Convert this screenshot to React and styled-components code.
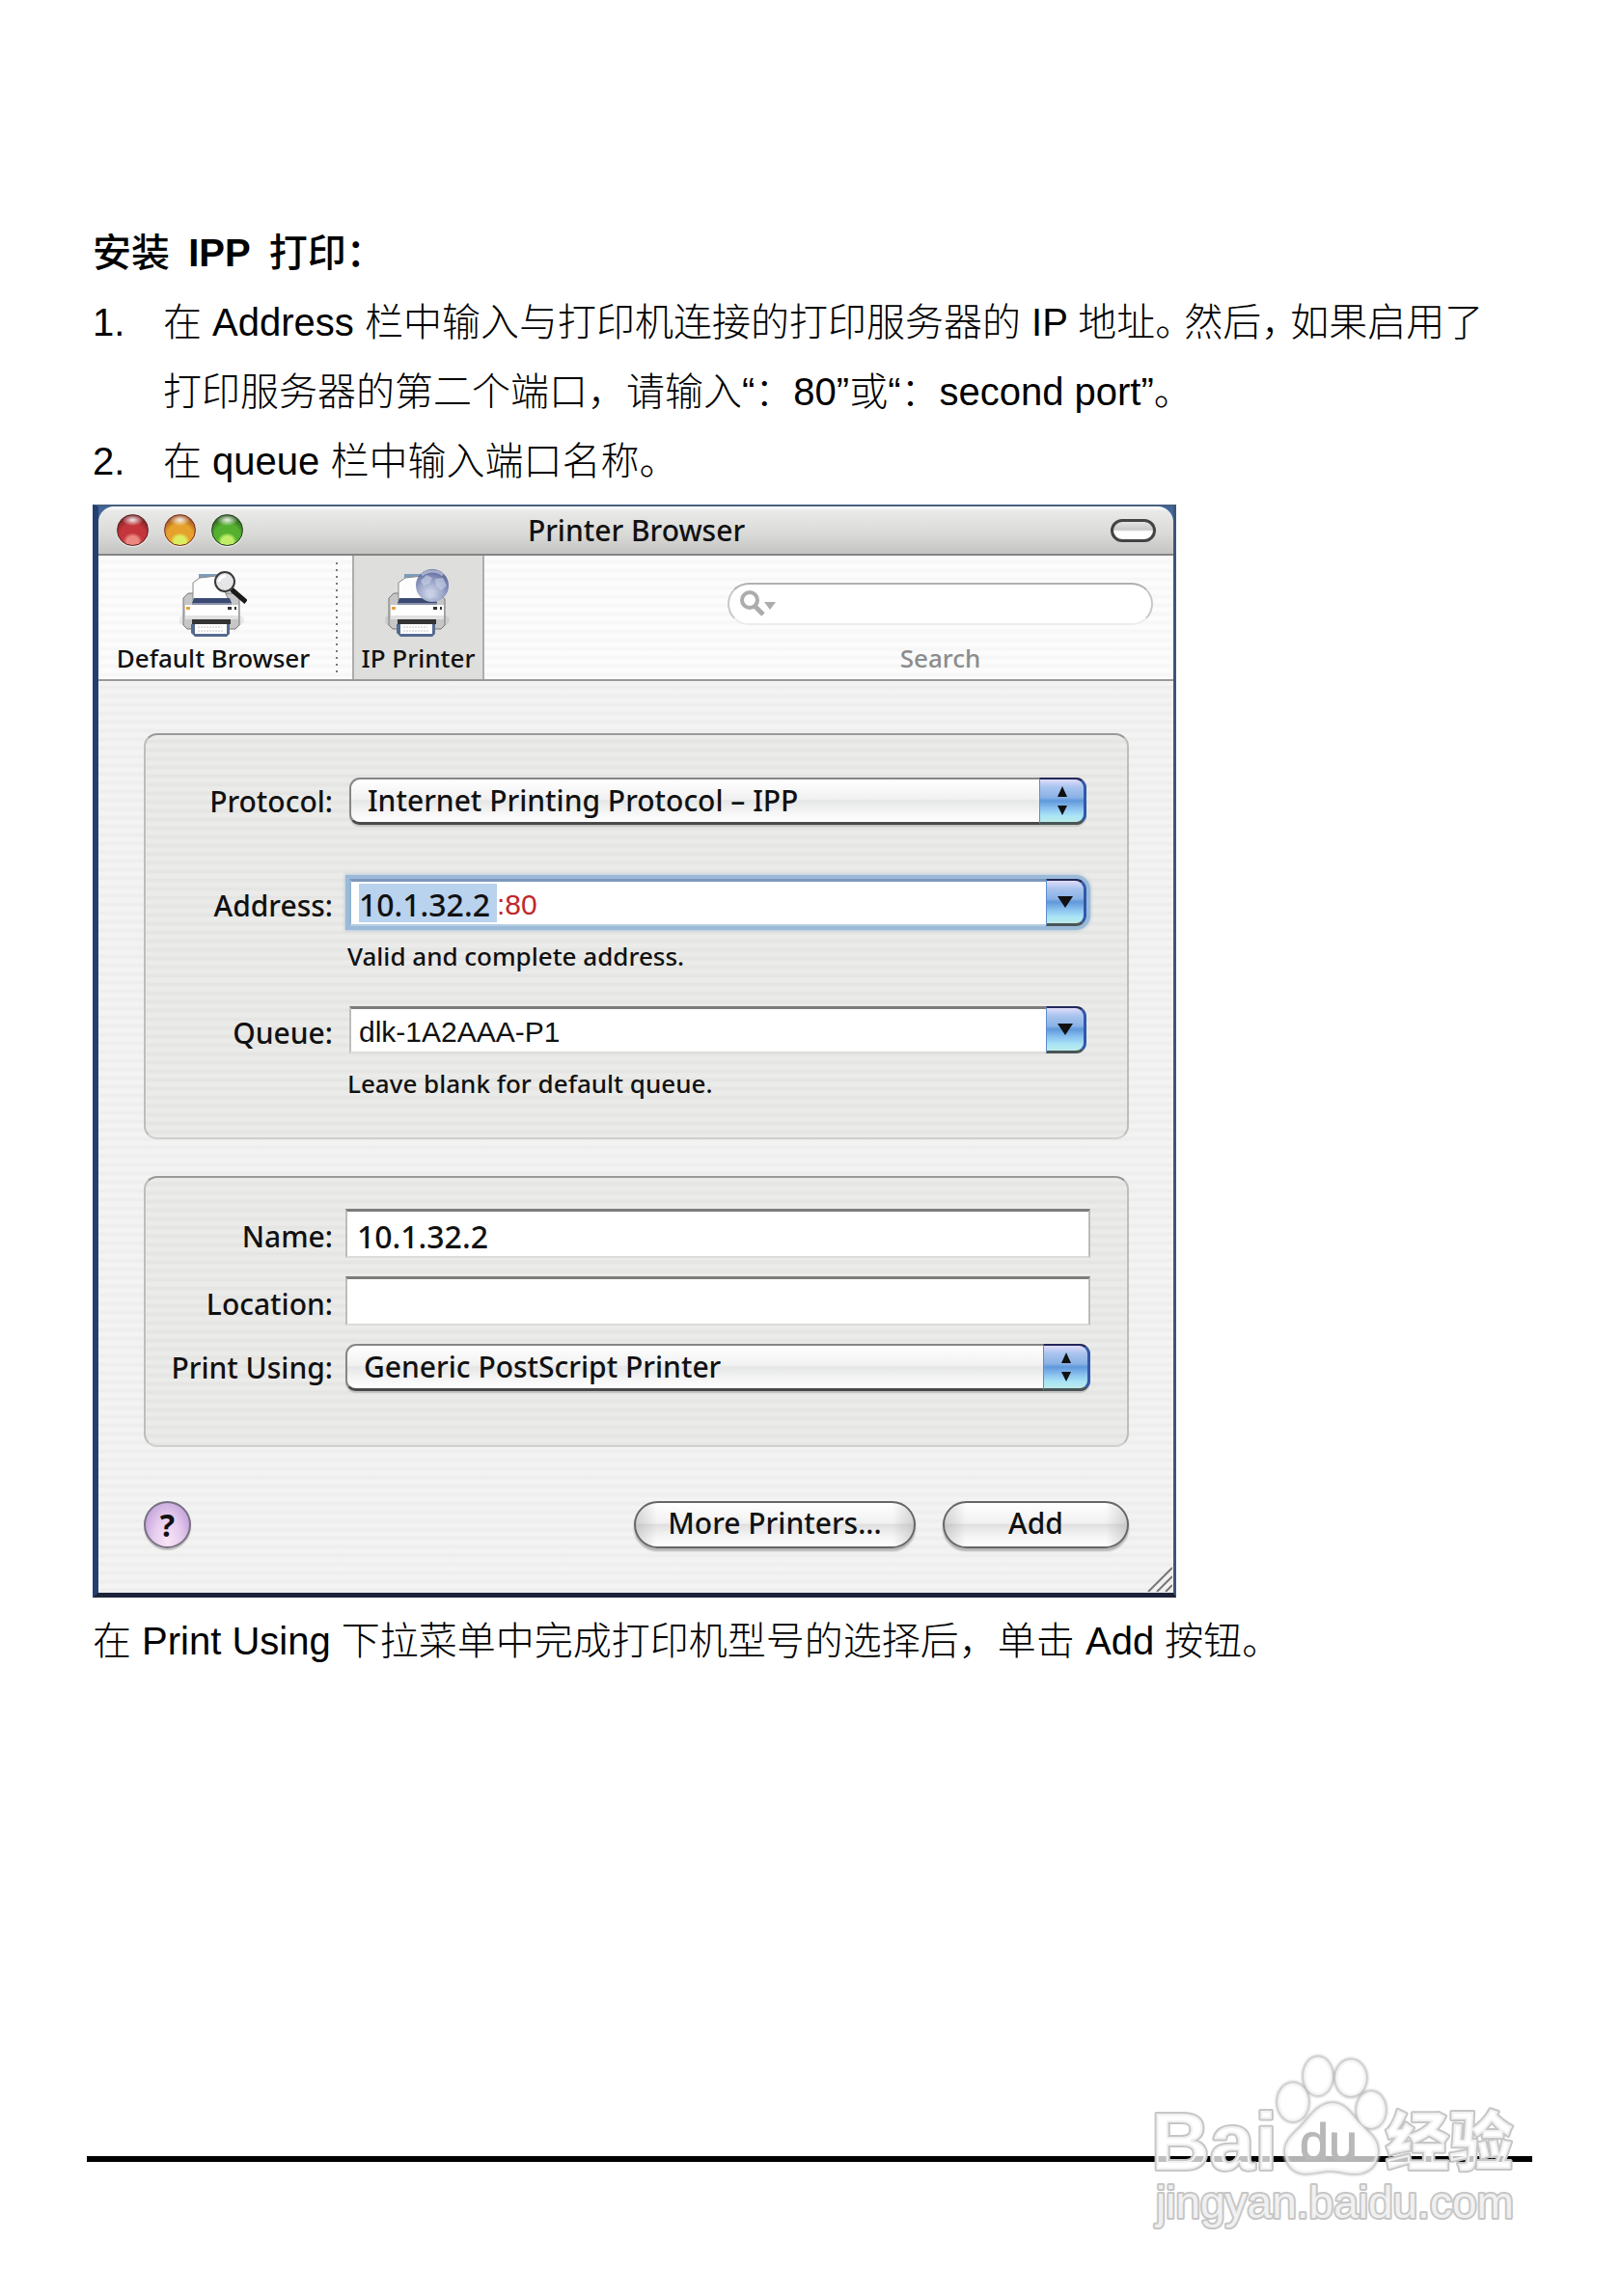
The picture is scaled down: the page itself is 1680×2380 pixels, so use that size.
import React from "react";
import styled, { createGlobalStyle, css } from "styled-components";

const UI_FONT = '"Noto Sans", "Open Sans", sans-serif';
const DOC_FONT = '"Liberation Sans", "Noto Sans CJK SC", sans-serif';

const GlobalStyle = createGlobalStyle`
  *, *::before, *::after { box-sizing: border-box; }
  body { margin: 0; background: #fff; color: #000; }
  button, input, select { font: inherit; color: inherit; margin: 0; }
`;

const pinstripe = (a, b) => css`
  background-color: ${a};
  background-image: repeating-linear-gradient(${a} 0 4px, ${b} 5px 8px, ${a} 9px);
`;

/* ---------- document ---------- */

const Page = styled.div`
  display: flex;
  flex-direction: column;
  min-height: 100vh;
  padding-top: 226px;
  font-family: ${DOC_FONT};
  font-size: 40px;
  font-weight: 300;
  line-height: 72px;
`;

const Article = styled.main`
  padding: 0 120px 0 96px;
`;

const Heading = styled.h1`
  margin: 0;
  font-size: inherit;
  font-weight: 500;
`;

const Acronym = styled.span`
  margin: 0 8px;
  font-weight: 700;
`;

const Steps = styled.ol`
  margin: 0;
  padding: 0;
  list-style: none;
`;

const Step = styled.li`
  display: grid;
  grid-template-columns: 73px 1fr;
`;

const Paragraph = styled.p`
  margin: 0;
`;

const TightMark = styled.span`
  margin-right: 10px;
  font-feature-settings: "halt";
`;

const Footer = styled.footer`
  position: relative;
  margin: auto 92px 0 90px;
  padding-bottom: 139px;
`;

const Rule = styled.hr`
  height: 6px;
  margin: 0;
  border: 0;
  background: #000;
`;

const Watermark = styled.svg`
  position: absolute;
  right: 6px;
  top: -113px;
  width: 400px;
  height: 200px;
`;

/* ---------- window ---------- */

const Window = styled.section`
  max-width: 1123px;
  margin: 9px 0;
  border: solid;
  border-width: 2px 3px 5px 6px;
  border-color: #46607f #3a5876 #1c2238 #263f72;
  background: #41669a;
  font-family: ${UI_FONT};
  font-size: 30px;
  font-weight: 500;
  line-height: 40px;
  color: #111;
`;

const TitleBar = styled.header`
  display: grid;
  grid-template-columns: 1fr auto 1fr;
  align-items: center;
  height: 51px;
  padding: 0 18px 0 19px;
  border-bottom: 2px solid #858585;
  border-radius: 16px 16px 0 0;
  background: linear-gradient(#fff, #e9e9e8 5px, #d9d9d7 60%, #c4c4c3);
`;

const Lights = styled.div`
  display: flex;
  gap: 16px;
`;

const Light = styled.button`
  width: 33px;
  height: 33px;
  padding: 0;
  border: 1px solid ${(p) => p.$rim};
  border-radius: 50%;
  background:
    radial-gradient(ellipse 11px 6px at 50% 16%, rgba(255, 255, 255, 0.9), rgba(255, 255, 255, 0) 100%),
    radial-gradient(ellipse 10px 9px at 50% 88%, ${(p) => p.$glow} 0 60%, rgba(255, 255, 255, 0) 100%),
    radial-gradient(circle at 50% 75%, ${(p) => p.$mid} 0 50%, ${(p) => p.$rim} 92%);
  box-shadow: 0 1px 1px rgba(255, 255, 255, 0.7);
`;

const Title = styled.h2`
  margin: 0;
  font-size: inherit;
  font-weight: inherit;
`;

const Pill = styled.button`
  justify-self: end;
  width: 47px;
  height: 24px;
  padding: 0;
  border: 3px solid #444;
  border-radius: 12px;
  background: linear-gradient(#e4e4e4, #c9c9c9 45%, #fff 55%);
`;

const Toolbar = styled.div`
  display: flex;
  height: 130px;
  border-bottom: 2px solid #999;
  font-size: 26px;
  line-height: 32px;
  ${pinstripe("#fcfcfc", "#f7f7f7")}
`;

const Tool = styled.button`
  display: flex;
  flex-direction: column;
  align-items: center;
  gap: 6px;
  padding: 14px 0 0;
  white-space: nowrap;
  width: ${(p) => (p.$active ? 137 : 238)}px;
  border: solid #adadad;
  border-width: 0 ${(p) => (p.$active ? 2 : 0)}px;
  background: ${(p) => (p.$active ? "#dededc" : "transparent")};
`;

const Dots = styled.div`
  width: 2px;
  height: 116px;
  margin: 7px 15px 0 8px;
  background: repeating-linear-gradient(#777 0 2px, transparent 2px 7px);
`;

const SearchArea = styled.div`
  display: flex;
  flex-direction: column;
  align-items: center;
  gap: 18px;
  width: 441px;
  margin-left: auto;
  margin-right: 21px;
  padding-top: 28px;
  color: #8c8c8c;
`;

const SearchBox = styled.div`
  display: flex;
  align-items: center;
  width: 100%;
  height: 44px;
  padding: 0 10px;
  border: 2px solid #c8c8c8;
  border-top-color: #b0b0b0;
  border-bottom-color: #ececec;
  border-radius: 22px;
  background: #fff;
`;

const BareInput = styled.input`
  flex: ${(p) => (p.$width ? "none" : 1)};
  min-width: 0;
  width: ${(p) => (p.$width ? p.$width + "px" : "auto")};
  height: 40px;
  padding: 0;
  border: 0;
  outline: 0;
  background: ${(p) => (p.$selected ? "#b9d2ee" : "transparent")};
  color: ${(p) => p.$color || "inherit"};
  font-family: ${(p) => (p.$plain ? DOC_FONT : "inherit")};
  font-size: ${(p) => (p.$plain ? 30 : 32)}px;
`;

const Body = styled.div`
  position: relative;
  padding: 54px 46px 46px 47px;
  ${pinstripe("#f3f3f3", "#eeeeee")}
`;

const Group = styled.fieldset`
  display: grid;
  grid-template-columns: 194px 1fr;
  align-items: center;
  min-width: 0;
  margin: 0 0 ${(p) => (p.$last ? 56 : 38)}px;
  column-gap: ${(p) => (p.$last ? 13 : 17)}px;
  row-gap: ${(p) => (p.$last ? 19 : 0)}px;
  padding: ${(p) => (p.$last ? "32px 38px 56px 0" : "44px 42px 38px 0")};
  border: 2px solid #bdbdbb;
  border-top-color: #999997;
  border-bottom-color: #d0d0ce;
  border-radius: 14px;
  ${pinstripe("#ebebe9", "#e5e5e3")}
`;

const Label = styled.label`
  padding-top: ${(p) => (p.$low ? 6 : 0)}px;
  text-align: right;
  white-space: nowrap;
`;

const Hint = styled.p`
  grid-column: 2;
  margin: 13px 0 ${(p) => (p.$spaced ? 34 : 0)}px -2px;
  font-size: 26px;
  line-height: 36px;
`;

const Popup = styled.div`
  position: relative;
  height: 49px;
  margin-bottom: ${(p) => (p.$spaced ? 56 : 0)}px;
`;

const PopupLabel = styled(Label)`
  margin-bottom: ${(p) => (p.$spaced ? 56 : 0)}px;
`;

const Select = styled.select`
  appearance: none;
  display: block;
  width: 100%;
  height: 49px;
  padding: 0 60px 0 17px;
  border: 2px solid #868686;
  border-bottom: 3px solid #4a4a4a;
  border-radius: 11px;
  background: linear-gradient(#fff, #f1f1f1 46%, #e5e6e6 50%, #f4f4f4 75%, #fff);
  box-shadow: 0 2px 1px rgba(0, 0, 0, 0.15);
  line-height: 40px;
`;

const aqua = css`
  border: solid;
  border-width: 2px 3px 3px 1px;
  border-color: #23285a #2f59ab #4a5557 #5d8dcf;
  background: linear-gradient(#e0dcfa, #a9c4ee 18%, #8ab2e6 42%, #5f98da 50%, #86bdee 66%, #a9e4f6 85%, #bcebe8);
`;

const Stepper = styled.span`
  position: absolute;
  top: 0;
  right: 0;
  display: grid;
  place-items: center;
  width: 49px;
  height: 49px;
  border-radius: 0 11px 11px 0;
  pointer-events: none;
  ${aqua}
`;

const Field = styled.div`
  display: flex;
  align-items: center;
  height: 51px;
  padding: 6px 0 0 10px;
  border: 2px solid #bdbdbb;
  border-top: 3px solid #7c7c7c;
  border-bottom-color: #dcdcda;
  background: #fff;
  ${(p) =>
    p.$combo &&
    css`
      height: 49px;
      padding: 0 0 0 8px;
      border-right: 0;
      border-radius: 0 11px 11px 0;
      ${BareInput} {
        padding-top: 3px;
      }
    `}
  ${(p) =>
    p.$focused &&
    css`
      border-color: #7c98bd #94b4d4 #b4cde0 #94b4d4;
      box-shadow: 0 0 0 4px #9bbad8, 0 0 3px 5px #bccddd;
    `}
`;

const Drop = styled.button`
  display: grid;
  place-items: center;
  flex: none;
  align-self: flex-start;
  width: 42px;
  height: 49px;
  margin-top: -3px;
  padding: 0;
  border-radius: 0 11px 11px 0;
  ${aqua}
`;

const Actions = styled.div`
  display: flex;
  align-items: center;
  gap: 28px;
`;

const Push = styled.button`
  width: ${(p) => p.$width}px;
  height: 49px;
  padding: 0 0 4px;
  border: 2px solid #666;
  border-radius: 25px;
  background:
    linear-gradient(90deg, rgba(150, 150, 150, 0.35), rgba(255, 255, 255, 0) 22px, rgba(255, 255, 255, 0) calc(100% - 22px), rgba(150, 150, 150, 0.35)),
    linear-gradient(#fff, #f1f1f1 46%, #e0e0e0 50%, #f4f4f4 75%, #fff);
  box-shadow: 0 3px 2px rgba(0, 0, 0, 0.25);
  line-height: 40px;
`;

const Help = styled.button`
  width: 49px;
  height: 49px;
  margin-right: auto;
  padding: 0;
  border: 2px solid #77707f;
  border-radius: 50%;
  background: radial-gradient(ellipse at 50% 90%, #f8e4f6 0, #e6cdee 45%, #bd9ad8 90%);
  box-shadow: 0 2px 1px rgba(0, 0, 0, 0.2);
  font-size: 32px;
  font-weight: 700;
  line-height: 40px;
`;

const Grip = styled.svg`
  position: absolute;
  right: 1px;
  bottom: 1px;
`;

/* ---------- drawings ---------- */

const Arrows = () => (
  <svg width="12" height="32" viewBox="0 0 12 32" aria-hidden="true">
    <path d="M6 1 L11 12 H1 Z M6 31 L11 21 H1 Z" fill="#111" />
  </svg>
);

const DownArrow = () => (
  <svg width="16" height="12" viewBox="0 0 16 12" aria-hidden="true">
    <path d="M0 0 H16 L8 12 Z" fill="#111" />
  </svg>
);

const Printer = () => (
  <>
    <ellipse cx="32" cy="51" rx="34" ry="11" fill="#000" opacity="0.07" />
    <path d="M19 10 V3 H40 V10 Z" fill="#7d9cba" />
    <path d="M3 28 L8 23 H55 L61 29 V56 L57 60 H7 L3 56 Z" fill="#c6c6c6" stroke="#777" strokeWidth="1" />
    <path d="M20 7 L38 5 L50 30 H13 V12 Z" fill="#fdfdfe" stroke="#8a8a8a" strokeWidth="1" />
    <path d="M14 28 H51 L53 33 H12 Z" fill="#3b4a72" />
    <path d="M12 33 H53 V35 H12 Z" fill="#8b93aa" />
    <path d="M5 35 H60 V46 H5 Z" fill="#fff" />
    <path d="M5 46 H60 V50 H5 Z" fill="#e2e2e2" />
    <path d="M6 37 H10 V40 H6 Z" fill="#e8a33c" />
    <path d="M49 37 H53 V40 H49 Z M56 37 H58 V40 H56 Z" fill="#333" />
    <path d="M12 50 H52 V55 H12 Z" fill="#343434" />
    <path d="M11 55 H51 V65 L48 68 H15 L11 64 Z" fill="#566b8f" />
    <path d="M15 55 H48 V65 H15 Z" fill="#fff" />
    <path d="M18 58 H43 M18 62 H44" stroke="#c4c4c4" strokeWidth="1" strokeDasharray="2 1" />
  </>
);

const BrowserIcon = () => (
  <svg width="70" height="70" viewBox="-1 -2 70 70" aria-hidden="true">
    <Printer />
    <path d="M53 19 L68 32" stroke="#1a1a1a" strokeWidth="5" />
    <circle cx="46" cy="11" r="10" fill="#e4e4e8" fillOpacity="0.94" stroke="#3a3a3a" strokeWidth="2" />
    <path d="M40 11 A7 7 0 0 1 47 5" fill="none" stroke="#fff" strokeWidth="3" />
  </svg>
);

const GlobeIcon = () => (
  <svg width="70" height="70" viewBox="-1 -2 70 70" aria-hidden="true">
    <defs>
      <radialGradient id="globe" cx="45%" cy="75%" r="75%">
        <stop offset="0" stopColor="#d5dbee" />
        <stop offset="0.5" stopColor="#98a4c8" />
        <stop offset="1" stopColor="#4d5a90" />
      </radialGradient>
    </defs>
    <Printer />
    <circle cx="48" cy="15" r="17" fill="url(#globe)" fillOpacity="0.94" />
    <path d="M36 10 L42 4 L48 7 L45 13 L39 15 Z M51 8 L59 7 L63 15 L57 20 L52 15 Z M41 20 L48 19 L50 26 L45 29 Z" fill="#c6cfe6" opacity="0.65" />
    <path d="M37 4 A17 17 0 0 1 59 4" fill="none" stroke="#c5cbe0" strokeWidth="3" opacity="0.7" />
  </svg>
);

const SearchIcon = () => (
  <svg width="38" height="28" viewBox="0 0 38 28" aria-hidden="true">
    <circle cx="11" cy="10" r="8" fill="none" stroke="#acacac" strokeWidth="4" />
    <path d="M16 16 L25 25" stroke="#acacac" strokeWidth="5" />
    <path d="M26 12 H38 L32 20 Z" fill="#acacac" />
  </svg>
);

const BaiduMark = () => (
  <Watermark viewBox="1182 2122 400 200" role="img" aria-label="Baidu 经验 jingyan.baidu.com">
    <defs>
      <filter id="haze" x="-5%" y="-5%" width="110%" height="110%">
        <feGaussianBlur stdDeviation="1" />
      </filter>
      <g id="paw">
        <ellipse cx="1340" cy="2179" rx="16" ry="20" />
        <ellipse cx="1366" cy="2152" rx="15" ry="20" />
        <ellipse cx="1400" cy="2154" rx="16" ry="19" />
        <ellipse cx="1421" cy="2187" rx="15" ry="19" />
        <path d="M1380 2180 C1392 2179 1400 2190 1407 2199 C1418 2211 1428 2216 1428 2230 C1428 2246 1416 2254 1402 2253 C1394 2253 1388 2250 1379 2250 C1370 2250 1364 2253 1352 2253 C1339 2252 1332 2242 1332 2230 C1332 2216 1346 2209 1355 2197 C1362 2189 1368 2181 1380 2180 Z" />
      </g>
    </defs>
    <g fill="none" stroke="#c4c4c4" strokeWidth="4" filter="url(#haze)">
      <use href="#paw" />
    </g>
    <g fill="#fff" fillOpacity="0.7">
      <use href="#paw" />
    </g>
    <g
      fill="#fff"
      fillOpacity="0.75"
      stroke="#c6c6c6"
      strokeWidth="4"
      strokeLinejoin="round"
      paintOrder="stroke"
      fontFamily={DOC_FONT}
      fontWeight="700"
    >
      <text x="1193" y="2249" fontSize="84">Bai</text>
      <text x="1436" y="2244" fontSize="66" fontWeight="900">经验</text>
      <text x="1198" y="2299" fontSize="46" fontWeight="400">jingyan.baidu.com</text>
    </g>
    <text x="1347" y="2239" fontSize="54" fontFamily={DOC_FONT} fill="#b8b8b8" stroke="#b8b8b8">du</text>
  </Watermark>
);

/* ---------- parts ---------- */

const PopupRow = ({ id, label, value, spaced }) => (
  <>
    <PopupLabel htmlFor={id} $spaced={spaced}>{label}</PopupLabel>
    <Popup $spaced={spaced}>
      <Select id={id} defaultValue={value}>
        <option>{value}</option>
      </Select>
      <Stepper><Arrows /></Stepper>
    </Popup>
  </>
);

const TextRow = ({ id, label, value }) => (
  <>
    <Label htmlFor={id} $low>{label}</Label>
    <Field>
      <BareInput id={id} type="text" defaultValue={value} />
    </Field>
  </>
);

const PrinterBrowser = () => (
  <Window aria-label="Printer Browser">
    <TitleBar>
      <Lights>
        <Light aria-label="Close" $rim="#5a1a1c" $mid="#c4353c" $glow="#ec8880" />
        <Light aria-label="Minimize" $rim="#7a2a18" $mid="#e6a22c" $glow="#dcee60" />
        <Light aria-label="Zoom" $rim="#1c3a18" $mid="#55b030" $glow="#c0ee68" />
      </Lights>
      <Title>Printer Browser</Title>
      <Pill aria-label="Toggle toolbar" />
    </TitleBar>
    <Toolbar>
      <Tool type="button">
        <BrowserIcon />
        Default Browser
      </Tool>
      <Dots />
      <Tool type="button" $active>
        <GlobeIcon />
        IP Printer
      </Tool>
      <SearchArea>
        <SearchBox>
          <SearchIcon />
          <BareInput id="search" type="text" />
        </SearchBox>
        <label htmlFor="search">Search</label>
      </SearchArea>
    </Toolbar>
    <Body>
      <Group>
        <PopupRow id="protocol" label="Protocol:" value="Internet Printing Protocol – IPP" spaced />
        <Label htmlFor="address" $low>Address:</Label>
        <Field $combo $focused>
          <BareInput id="address" type="text" defaultValue="10.1.32.2" $width={143} $selected />
          <BareInput aria-label="Port" type="text" defaultValue=":80" $plain $color="#c0282c" />
          <Drop type="button" aria-label="Recent addresses"><DownArrow /></Drop>
        </Field>
        <Hint $spaced>Valid and complete address.</Hint>
        <Label htmlFor="queue" $low>Queue:</Label>
        <Field $combo>
          <BareInput id="queue" type="text" defaultValue="dlk-1A2AAA-P1" $plain />
          <Drop type="button" aria-label="Recent queues"><DownArrow /></Drop>
        </Field>
        <Hint>Leave blank for default queue.</Hint>
      </Group>
      <Group $last>
        <TextRow id="name" label="Name:" value="10.1.32.2" />
        <TextRow id="location" label="Location:" value="" />
        <PopupRow id="driver" label="Print Using:" value="Generic PostScript Printer" />
      </Group>
      <Actions>
        <Help type="button">?</Help>
        <Push type="button" $width={292}>More Printers...</Push>
        <Push type="button" $width={193}>Add</Push>
      </Actions>
      <Grip width="26" height="26" viewBox="0 0 26 26" aria-hidden="true">
        <path d="M1 26 L26 1 M10 26 L26 10 M19 26 L26 19" stroke="#777" strokeWidth="2" />
      </Grip>
    </Body>
  </Window>
);

export default function App() {
  return (
    <>
      <GlobalStyle />
      <Page lang="zh-CN">
        <Article>
          <Heading>安装 <Acronym>IPP</Acronym> 打印：</Heading>
          <Steps>
            <Step>
              <span>1.</span>
              <span>
                在 Address 栏中输入与打印机连接的打印服务器的 IP 地址<TightMark>。</TightMark>然后<TightMark>，</TightMark>如果启用了打印服务器的第二个端口，请输入“：80”或“：second port”。
              </span>
            </Step>
            <Step>
              <span>2.</span>
              <span>在 queue 栏中输入端口名称。</span>
            </Step>
          </Steps>
          <PrinterBrowser />
          <Paragraph>在 Print Using 下拉菜单中完成打印机型号的选择后，单击 Add 按钮。</Paragraph>
        </Article>
        <Footer>
          <Rule />
          <BaiduMark />
        </Footer>
      </Page>
    </>
  );
}
